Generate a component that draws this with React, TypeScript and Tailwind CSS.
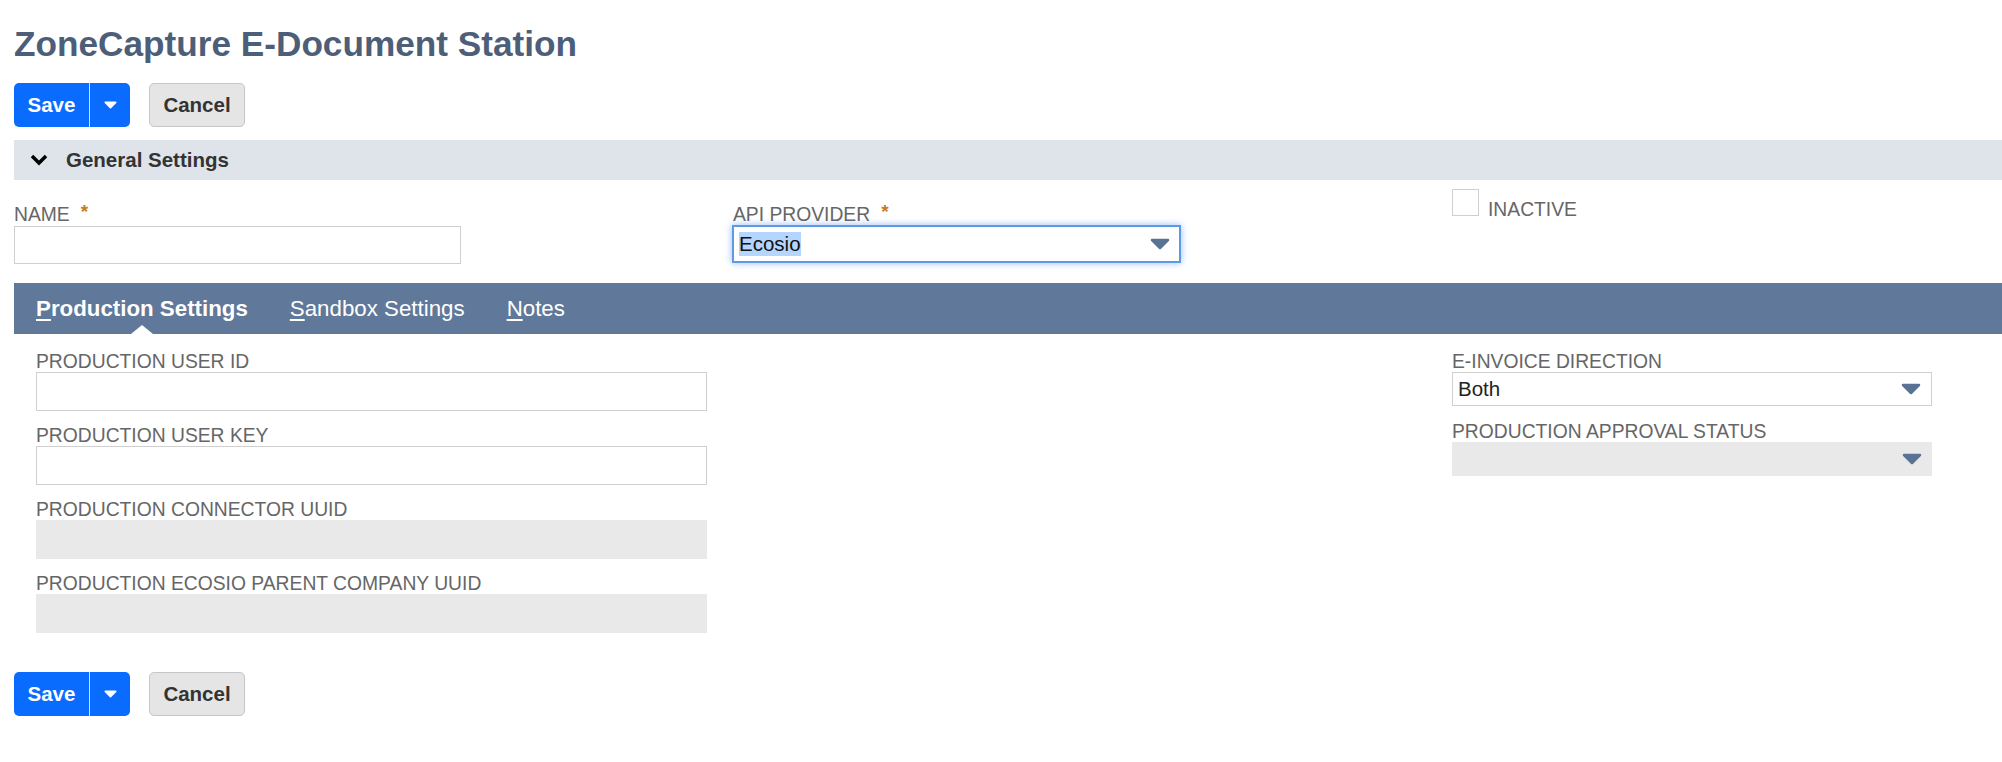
import { ReactNode } from 'react'

const font = "font-['Liberation_Sans',Arial,Helvetica,sans-serif]"

// small filled triangle used in selects and the split save button
const Caret = ({ className }: { className?: string }) => (
  <svg viewBox="0 0 20 12" className={className}>
    <polygon points="2,2 18,2 10,10" fill="currentColor" stroke="currentColor" strokeWidth="2.5" strokeLinejoin="round" />
  </svg>
)

const Required = () => <span className="ml-[11px] text-[#c97a1a] font-bold text-[19px] relative -top-[3px]">*</span>

const Label = ({ children, required }: { children: ReactNode; required?: boolean }) => (
  <div className="pt-[4px] text-[19.3px] leading-[20px] text-[#666] uppercase">
    {children}
    {required && <Required />}
  </div>
)

const ActionButtons = () => (
  <div className="flex items-center gap-[19px]">
    <div className="flex h-[44px] rounded-[5px] bg-[#0a6cff] text-white overflow-hidden">
      <button className="w-[75px] flex items-center justify-center text-[20.5px] font-bold">Save</button>
      <div className="w-px bg-white/80" />
      <button className="w-[40px] flex items-center justify-center">
        <Caret className="w-[13px] h-[8px] text-white" />
      </button>
    </div>
    <button className="h-[44px] w-[96px] rounded-[5px] border border-[#c6c6c6] bg-[#e5e5e5] text-[20.5px] font-bold text-[#333]">
      Cancel
    </button>
  </div>
)

const TextField = ({ label, disabled }: { label: string; disabled?: boolean }) => (
  <div className="mb-[11px]">
    <Label>{label}</Label>
    {disabled ? (
      <div className="h-[39px] w-[671px] bg-[#e9e9e9]" />
    ) : (
      <div className="h-[39px] w-[671px] border border-[#cfcfcf] bg-white" />
    )}
  </div>
)

const SelectField = ({ label, value, disabled }: { label: string; value?: string; disabled?: boolean }) => (
  <div className="mb-[12px]">
    <Label>{label}</Label>
    <div
      className={
        'h-[34px] w-[480px] flex items-center justify-between pl-[5px] pr-[10px] ' +
        (disabled ? 'bg-[#e9e9e9]' : 'border border-[#cfcfcf] bg-white')
      }
    >
      <span className="text-[20.5px] text-[#222]">{value}</span>
      <Caret className="w-[20px] h-[12px] text-[#5a7394]" />
    </div>
  </div>
)

export default function App() {
  return (
    <div className={`min-h-screen bg-white pl-[14px] ${font}`}>
      <h1 className="pt-[22px] text-[35.2px] leading-[44px] font-bold text-[#4d5e79]">ZoneCapture E-Document Station</h1>

      <div className="mt-[17px]">
        <ActionButtons />
      </div>

      {/* General settings section */}
      <div className="mt-[13px] h-[40px] bg-[#dfe4eb] flex items-center pl-[16px]">
        <svg viewBox="0 0 18 12" className="w-[18px] h-[12px] text-black">
          <polyline points="2,2 9,9 16,2" fill="none" stroke="currentColor" strokeWidth="3.5" />
        </svg>
        <span className="ml-[18px] text-[20.5px] font-bold text-[#333]">General Settings</span>
      </div>

      <div className="flex">
        <div className="w-[719px] pt-[21px]">
          <Label required>Name</Label>
          <div className="mt-[1px] h-[38px] w-[447px] border border-[#cfcfcf] bg-white" />
        </div>
        <div className="w-[719px] pt-[21px]">
          <Label required>API Provider</Label>
          <div className="-ml-px h-[38px] w-[449px] flex items-center justify-between border-2 border-[#5c9be3] bg-white pl-[5px] pr-[9px] shadow-[0_0_7px_rgba(77,144,254,0.6)]">
            <span className="text-[20.5px] text-[#111] bg-[#b4d5fe] leading-[24px]">Ecosio</span>
            <Caret className="w-[20px] h-[12px] text-[#5a7394]" />
          </div>
        </div>
        <div className="pt-[9px] flex items-start">
          <div className="w-[27px] h-[27px] border border-[#cfcfcf] bg-white" />
          <span className="ml-[9px] mt-[9px] text-[19.3px] leading-[24px] text-[#666]">INACTIVE</span>
        </div>
      </div>

      {/* Subtabs */}
      <div className="mt-[19px] h-[51px] bg-[#607899] flex items-center pl-[22px] gap-[42px] text-white text-[22.3px]">
        <div className="relative h-full flex items-center">
          <span className="font-bold">
            <u className="underline-offset-[3px]">P</u>roduction Settings
          </span>
          <span className="absolute bottom-0 left-1/2 -translate-x-1/2 w-0 h-0 border-l-[11px] border-r-[11px] border-b-[9px] border-l-transparent border-r-transparent border-b-white" />
        </div>
        <span>
          <u className="underline-offset-[3px]">S</u>andbox Settings
        </span>
        <span>
          <u className="underline-offset-[3px]">N</u>otes
        </span>
      </div>

      <div className="flex pt-[14px] pl-[22px]">
        <div className="w-[1416px]">
          <TextField label="Production User ID" />
          <TextField label="Production User Key" />
          <TextField label="Production Connector UUID" disabled />
          <TextField label="Production Ecosio Parent Company UUID" disabled />
        </div>
        <div>
          <SelectField label="E-Invoice Direction" value="Both" />
          <SelectField label="Production Approval Status" disabled />
        </div>
      </div>

      <div className="mt-[28px] pb-[40px]">
        <ActionButtons />
      </div>
    </div>
  )
}
